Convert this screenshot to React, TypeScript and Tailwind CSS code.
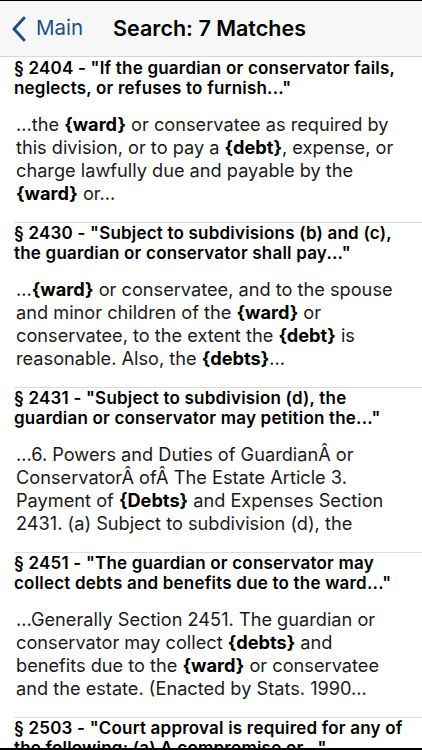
import React from "react";

type Part = { t: string; b?: boolean };

interface Match {
  title: string;
  body: Part[];
}

const matches: Match[] = [
  {
    title: '§ 2404 - "If the guardian or conservator fails, neglects, or refuses to furnish..."',
    body: [
      { t: "...the " },
      { t: "{ward}", b: true },
      { t: " or conservatee as required by this division, or to pay a " },
      { t: "{debt}", b: true },
      { t: ", expense, or charge lawfully due and payable by the " },
      { t: "{ward}", b: true },
      { t: " or..." },
    ],
  },
  {
    title: '§ 2430 - "Subject to subdivisions (b) and (c), the guardian or conservator shall pay..."',
    body: [
      { t: "..." },
      { t: "{ward}", b: true },
      { t: " or conservatee, and to the spouse and minor children of the " },
      { t: "{ward}", b: true },
      { t: " or conservatee, to the extent the " },
      { t: "{debt}", b: true },
      { t: " is reasonable. Also, the " },
      { t: "{debts}", b: true },
      { t: "..." },
    ],
  },
  {
    title: '§ 2431 - "Subject to subdivision (d), the guardian or conservator may petition the..."',
    body: [
      { t: "...6. Powers and Duties of GuardianÂ or ConservatorÂ ofÂ The Estate Article 3. Payment of " },
      { t: "{Debts}", b: true },
      { t: " and Expenses Section 2431. (a) Subject to subdivision (d), the" },
    ],
  },
  {
    title: '§ 2451 - "The guardian or conservator may collect debts and benefits due to the ward..."',
    body: [
      { t: "...Generally Section 2451. The guardian or conservator may collect " },
      { t: "{debts}", b: true },
      { t: " and benefits due to the " },
      { t: "{ward}", b: true },
      { t: " or conservatee and the estate. (Enacted by Stats. 1990..." },
    ],
  },
  {
    title: '§ 2503 - "Court approval is required for any of the following: (a) A compromise or..."',
    body: [],
  },
];

const font = { fontFamily: 'Inter, "Liberation Sans", Arial, sans-serif' };

export default function App() {
  return (
    <div className="relative w-[422px] h-[750px] overflow-hidden bg-white" style={font}>
      <div className="h-px bg-black" />
      <div className="flex items-center h-[56px] bg-[#f7f7f7] border-b border-[#d8d8d8]">
        <div className="flex items-center pl-[11px] text-[#1d4f86]">
          <svg width="16" height="26" viewBox="0 0 16 26" fill="none">
            <path d="M13 2 L3 13 L13 24" stroke="currentColor" strokeWidth="3" strokeLinecap="round" strokeLinejoin="round" />
          </svg>
          <span className="ml-[9px] text-[20.5px]">Main</span>
        </div>
        <div className="ml-[30px] text-[21.5px] font-semibold text-black">Search: 7 Matches</div>
      </div>
      <div className="flex flex-col">
        {matches.map((m, i) => (
          <div key={i} className={i > 0 ? "ml-[14px] border-t border-[#dcdcdc]" : "ml-[14px]"}>
            <div className={i === 0 ? "pt-[2px] pr-3 text-[17px] leading-[19.5px] tracking-[0.2px] font-semibold text-black" : "pt-[1px] pr-3 text-[17px] leading-[19.5px] tracking-[0.2px] font-semibold text-black"}>
              {m.title}
            </div>
            {m.body.length > 0 && (
              <div className="pt-[15px] pb-[17px] pl-[2px] pr-[26px] text-[18.2px] leading-[23px] text-[#1a1a1a]">
                {m.body.map((p, j) =>
                  p.b ? (
                    <b key={j} className="font-bold text-black">{p.t}</b>
                  ) : (
                    <span key={j}>{p.t}</span>
                  )
                )}
              </div>
            )}
          </div>
        ))}
      </div>
      <div className="absolute bottom-0 left-0 right-0 h-[2px] bg-black" />
    </div>
  );
}
